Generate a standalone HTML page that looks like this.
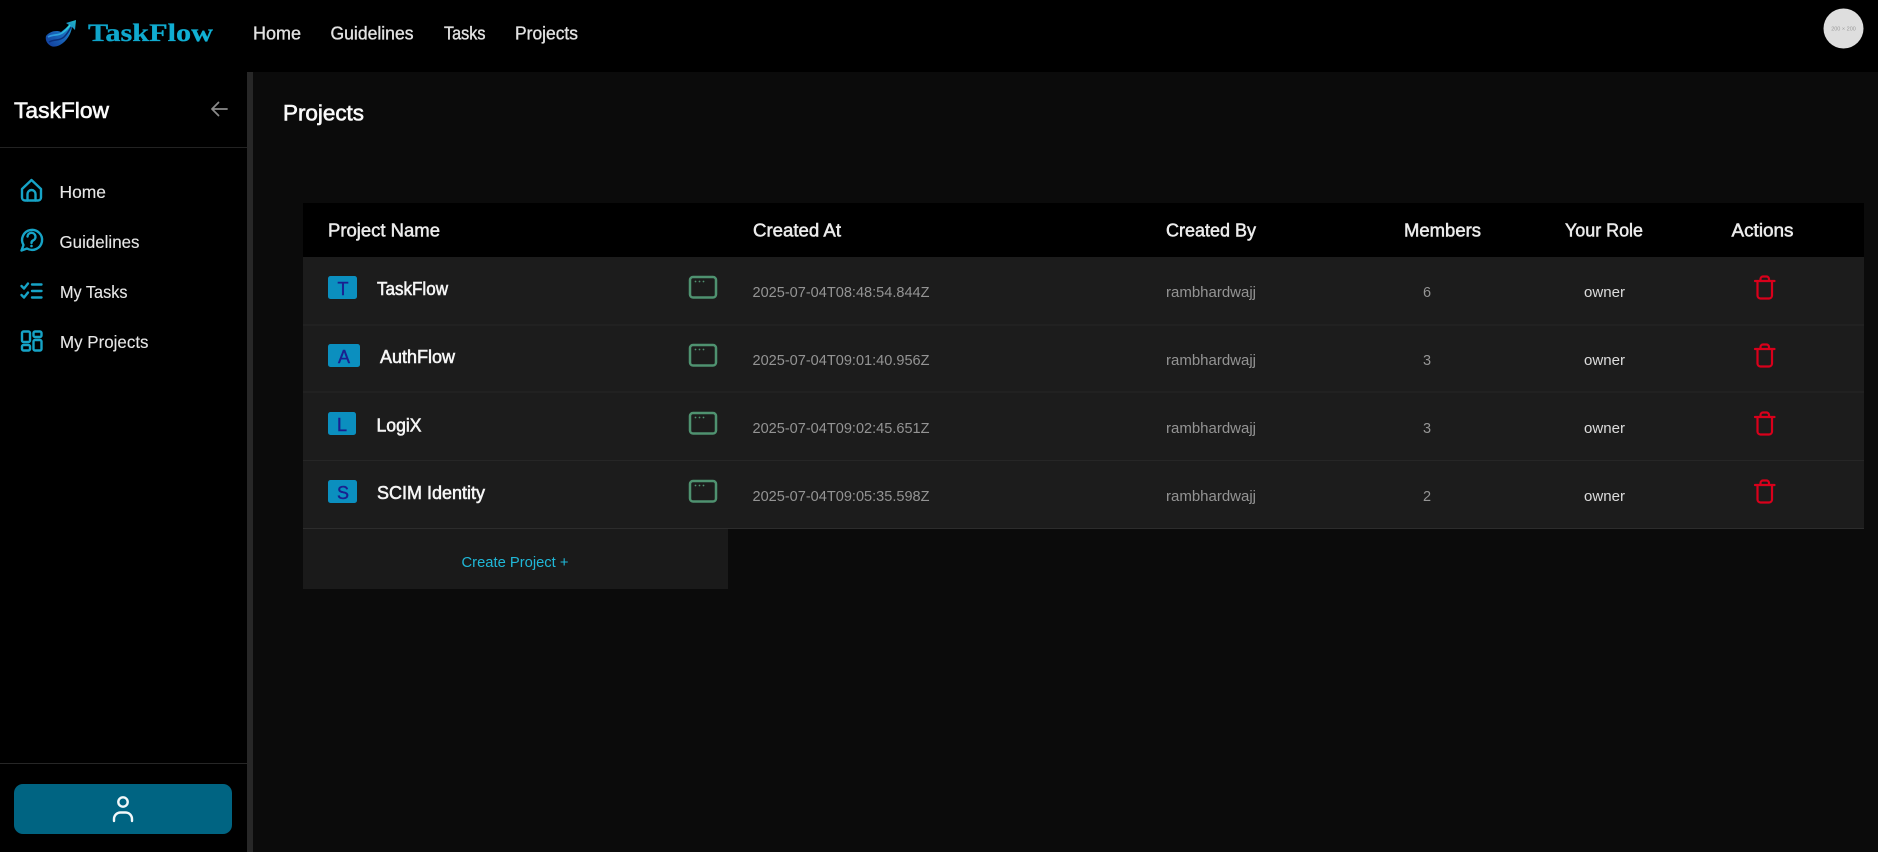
<!DOCTYPE html>
<html lang="en"><head><meta charset="utf-8"><title>TaskFlow – Projects</title>
<style>
html,body{margin:0;padding:0;background:#0b0b0b;width:1878px;height:852px;overflow:hidden}
svg{display:block}
text{font-family:"Liberation Sans",Arial,sans-serif}
.nav{font-size:18px;fill:#e2e2e2;stroke:#e2e2e2;stroke-width:.35}
.side{font-size:17.5px;fill:#e6e6e6;stroke:#e6e6e6;stroke-width:.12}
.th{font-size:18px;fill:#ececec;stroke:#ececec;stroke-width:.5}
.name{font-size:18px;fill:#f5f5f5;stroke:#f5f5f5;stroke-width:.55}
.muted{font-size:14.5px;fill:#949494}
.own{font-size:14.5px;fill:#dcdcdc}
.bl{font-size:18px;fill:#1a1f8f;stroke:#1a1f8f;stroke-width:.4;text-anchor:middle}
.ic{fill:none;stroke:#16a3c6;stroke-width:2.4;stroke-linecap:round;stroke-linejoin:round}
.win{fill:none;stroke:#4f9270;stroke-width:2.5}
.tr{fill:none;stroke:#d9001b;stroke-width:2.2;stroke-linejoin:round;stroke-linecap:round}
</style></head><body>
<svg width="1878" height="852" viewBox="0 0 1878 852" xmlns="http://www.w3.org/2000/svg">
<defs>
<linearGradient id="lg" x1="0" x2="1" y1="0" y2="0"><stop offset="0" stop-color="#0fa3c9"/><stop offset="1" stop-color="#11b4d6"/></linearGradient>
<linearGradient id="l1" x1="0" y1="1" x2="1" y2="0"><stop offset="0" stop-color="#123a9a"/><stop offset=".55" stop-color="#1a6fc0"/><stop offset="1" stop-color="#1fb8c8"/></linearGradient>
<linearGradient id="l2" x1="0" y1="1" x2="1" y2="0"><stop offset="0" stop-color="#2f8fe0"/><stop offset="1" stop-color="#2ad8d8"/></linearGradient>
</defs>
<rect width="1878" height="852" fill="#0b0b0b"/>

<!-- top nav -->
<rect width="1878" height="72" fill="#000"/>
<path d="M46 36C50 31 57 30 61 32C65 29 67 27 69 25L66 23L76 20L75 30L72 27C71 34 67 41 60 45C56 47 53 47 51 46C47 44 45 40 46 36Z" fill="url(#l1)"/>
<path d="M48 37C53 34 58 36 62 33C65 31 68 28 70 25" fill="none" stroke="url(#l2)" stroke-width="1.700"/>
<path d="M49 42C54 39 60 41 64 37C67 34 69 31 71 27" fill="none" stroke="#0a2f7a" stroke-width="1.500"/>
<text x="88" y="41" font-size="25" font-weight="700" fill="url(#lg)" stroke="#0fa8cc" stroke-width=".3" style="font-family:'Liberation Serif',serif" textLength="125" lengthAdjust="spacingAndGlyphs">TaskFlow</text>
<text class="nav" x="253" y="39.5" textLength="48" lengthAdjust="spacingAndGlyphs">Home</text>
<text class="nav" x="330.500" y="39.5" textLength="83" lengthAdjust="spacingAndGlyphs">Guidelines</text>
<text class="nav" x="444" y="39.5" textLength="41.500" lengthAdjust="spacingAndGlyphs">Tasks</text>
<text class="nav" x="515" y="39.5" textLength="63" lengthAdjust="spacingAndGlyphs">Projects</text>
<circle cx="1843.500" cy="28.500" r="20" fill="#dedede"/>
<text x="1843.500" y="30.500" font-size="5.500" fill="#9a9a9a" text-anchor="middle">200 × 200</text>

<!-- sidebar -->
<rect y="72" width="247" height="780" fill="#000"/>
<rect x="247" y="72" width="6" height="780" fill="#272727"/>
<text x="14" y="118" font-size="22" fill="#fafafa" stroke="#fafafa" stroke-width=".6" textLength="95" lengthAdjust="spacingAndGlyphs">TaskFlow</text>
<path d="M227 109H212M218.500 102.500L212 109L218.500 115.500" fill="none" stroke="#8a8a8a" stroke-width="1.800" stroke-linecap="round" stroke-linejoin="round"/>
<rect y="147" width="247" height="1" fill="#222"/>

<path class="ic" d="M22 189L31.500 180L41 189V197.500A3 3 0 0 1 38 200.500H25A3 3 0 0 1 22 197.500Z"/>
<path class="ic" d="M27.500 200.500V194A4 4 0 0 1 35.500 194V200.500"/>
<text class="side" x="59.500" y="198" textLength="46.500" lengthAdjust="spacingAndGlyphs">Home</text>

<path class="ic" d="M21.500 250.500L23.500 245A10 10 0 1 1 27 248.500Z"/>
<path class="ic" d="M27.500 236.500A4 4 0 1 1 33 240.500C32 241 31.500 241.500 31.500 243" stroke-width="2"/>
<circle cx="31.500" cy="246" r="1.300" fill="#16a3c6"/>
<text class="side" x="59.500" y="248" textLength="80" lengthAdjust="spacingAndGlyphs">Guidelines</text>

<path class="ic" d="M21.500 286L24 288.500L28 283.500M21.500 295L24 297.500L28 292.500M32 284.500H41.500M32 291H41.500M32 297.500H41.500"/>
<text class="side" x="60" y="298" textLength="67.500" lengthAdjust="spacingAndGlyphs">My Tasks</text>

<rect class="ic" x="22" y="331.500" width="8" height="10.500" rx="1.500"/>
<rect class="ic" x="22" y="345" width="8" height="5.500" rx="1.500"/>
<rect class="ic" x="33.500" y="331.500" width="8" height="5.500" rx="1.500"/>
<rect class="ic" x="33.500" y="340" width="8" height="10.500" rx="1.500"/>
<text class="side" x="60" y="348" textLength="88.500" lengthAdjust="spacingAndGlyphs">My Projects</text>

<rect y="763" width="247" height="1" fill="#262626"/>
<rect x="14" y="784" width="218" height="50" rx="9" fill="#006482"/>
<circle cx="123" cy="802" r="4.700" fill="none" stroke="#f2f8fa" stroke-width="2.400"/>
<path d="M114 821V819A6.500 6.500 0 0 1 120.500 812.500H125.500A6.500 6.500 0 0 1 132 819V821" fill="none" stroke="#f2f8fa" stroke-width="2.400" stroke-linecap="round"/>

<!-- main -->
<text x="283" y="120.500" font-size="22" fill="#fafafa" stroke="#fafafa" stroke-width=".6" textLength="81" lengthAdjust="spacingAndGlyphs">Projects</text>

<!-- table -->
<rect x="303" y="203" width="1561" height="54" fill="#000"/>
<rect x="303" y="257" width="1561" height="271" fill="#1c1c1c"/>
<rect x="303" y="324.500" width="1561" height="1" fill="#262626"/>
<rect x="303" y="391.500" width="1561" height="1" fill="#262626"/>
<rect x="303" y="460" width="1561" height="1" fill="#262626"/>
<rect x="303" y="528" width="1561" height="1" fill="#2c2c2c"/>
<rect x="303" y="529" width="425" height="60" fill="#1a1a1a"/>

<text class="th" x="328" y="236.500" textLength="112" lengthAdjust="spacingAndGlyphs">Project Name</text>
<text class="th" x="753" y="236.500" textLength="88" lengthAdjust="spacingAndGlyphs">Created At</text>
<text class="th" x="1166" y="236.500" textLength="90" lengthAdjust="spacingAndGlyphs">Created By</text>
<text class="th" x="1404" y="236.500" textLength="77" lengthAdjust="spacingAndGlyphs">Members</text>
<text class="th" x="1565" y="236.500" textLength="78" lengthAdjust="spacingAndGlyphs">Your Role</text>
<text class="th" x="1731.500" y="236.500" textLength="62" lengthAdjust="spacingAndGlyphs">Actions</text>

<!-- row 1 -->
<rect x="328" y="276" width="29" height="23" rx="2.500" fill="#0b8fbf"/><text class="bl" x="343" y="295">T</text>
<text class="name" x="377" y="295" textLength="71" lengthAdjust="spacingAndGlyphs">TaskFlow</text>
<rect class="win" x="690" y="277" width="26" height="20.500" rx="3"/><circle cx="695.500" cy="281.500" r=".9" fill="#4f9270"/><circle cx="699.500" cy="281.500" r=".9" fill="#4f9270"/><circle cx="703.500" cy="281.500" r=".9" fill="#4f9270"/>
<text class="muted" x="752.500" y="297" textLength="177" lengthAdjust="spacingAndGlyphs">2025-07-04T08:48:54.844Z</text>
<text class="muted" x="1166" y="297" textLength="90" lengthAdjust="spacingAndGlyphs">rambhardwajj</text>
<text class="muted" x="1427" y="297" text-anchor="middle">6</text>
<text class="own" x="1584" y="297" textLength="41" lengthAdjust="spacingAndGlyphs">owner</text>
<path class="tr" d="M1755 281H1774.500M1760.500 281V279A2.500 2.500 0 0 1 1763 276.500H1766.500A2.500 2.500 0 0 1 1769 279V281M1757.500 281V295.500A3 3 0 0 0 1760.500 298.500H1769A3 3 0 0 0 1772 295.500V281"/>

<!-- row 2 -->
<rect x="328" y="344" width="32" height="23" rx="2.500" fill="#0b8fbf"/><text class="bl" x="344" y="363">A</text>
<text class="name" x="380" y="363" textLength="75" lengthAdjust="spacingAndGlyphs">AuthFlow</text>
<rect class="win" x="690" y="345" width="26" height="20.500" rx="3"/><circle cx="695.500" cy="349.500" r=".9" fill="#4f9270"/><circle cx="699.500" cy="349.500" r=".9" fill="#4f9270"/><circle cx="703.500" cy="349.500" r=".9" fill="#4f9270"/>
<text class="muted" x="752.500" y="365" textLength="177" lengthAdjust="spacingAndGlyphs">2025-07-04T09:01:40.956Z</text>
<text class="muted" x="1166" y="365" textLength="90" lengthAdjust="spacingAndGlyphs">rambhardwajj</text>
<text class="muted" x="1427" y="365" text-anchor="middle">3</text>
<text class="own" x="1584" y="365" textLength="41" lengthAdjust="spacingAndGlyphs">owner</text>
<path class="tr" transform="translate(0 68)" d="M1755 281H1774.500M1760.500 281V279A2.500 2.500 0 0 1 1763 276.500H1766.500A2.500 2.500 0 0 1 1769 279V281M1757.500 281V295.500A3 3 0 0 0 1760.500 298.500H1769A3 3 0 0 0 1772 295.500V281"/>

<!-- row 3 -->
<rect x="328" y="412" width="28" height="23" rx="2.500" fill="#0b8fbf"/><text class="bl" x="342" y="431">L</text>
<text class="name" x="376.500" y="431.500" textLength="45" lengthAdjust="spacingAndGlyphs">LogiX</text>
<rect class="win" x="690" y="413" width="26" height="20.500" rx="3"/><circle cx="695.500" cy="417.500" r=".9" fill="#4f9270"/><circle cx="699.500" cy="417.500" r=".9" fill="#4f9270"/><circle cx="703.500" cy="417.500" r=".9" fill="#4f9270"/>
<text class="muted" x="752.500" y="433" textLength="177" lengthAdjust="spacingAndGlyphs">2025-07-04T09:02:45.651Z</text>
<text class="muted" x="1166" y="433" textLength="90" lengthAdjust="spacingAndGlyphs">rambhardwajj</text>
<text class="muted" x="1427" y="433" text-anchor="middle">3</text>
<text class="own" x="1584" y="433" textLength="41" lengthAdjust="spacingAndGlyphs">owner</text>
<path class="tr" transform="translate(0 136)" d="M1755 281H1774.500M1760.500 281V279A2.500 2.500 0 0 1 1763 276.500H1766.500A2.500 2.500 0 0 1 1769 279V281M1757.500 281V295.500A3 3 0 0 0 1760.500 298.500H1769A3 3 0 0 0 1772 295.500V281"/>

<!-- row 4 -->
<rect x="328" y="480" width="29" height="23" rx="2.500" fill="#0b8fbf"/><text class="bl" x="343" y="499">S</text>
<text class="name" x="377" y="499" textLength="108" lengthAdjust="spacingAndGlyphs">SCIM Identity</text>
<rect class="win" x="690" y="481" width="26" height="20.500" rx="3"/><circle cx="695.500" cy="485.500" r=".9" fill="#4f9270"/><circle cx="699.500" cy="485.500" r=".9" fill="#4f9270"/><circle cx="703.500" cy="485.500" r=".9" fill="#4f9270"/>
<text class="muted" x="752.500" y="501" textLength="177" lengthAdjust="spacingAndGlyphs">2025-07-04T09:05:35.598Z</text>
<text class="muted" x="1166" y="501" textLength="90" lengthAdjust="spacingAndGlyphs">rambhardwajj</text>
<text class="muted" x="1427" y="501" text-anchor="middle">2</text>
<text class="own" x="1584" y="501" textLength="41" lengthAdjust="spacingAndGlyphs">owner</text>
<path class="tr" transform="translate(0 204)" d="M1755 281H1774.500M1760.500 281V279A2.500 2.500 0 0 1 1763 276.500H1766.500A2.500 2.500 0 0 1 1769 279V281M1757.500 281V295.500A3 3 0 0 0 1760.500 298.500H1769A3 3 0 0 0 1772 295.500V281"/>

<text x="461.500" y="567" font-size="15" fill="#20b8d8" textLength="107" lengthAdjust="spacingAndGlyphs">Create Project +</text>
</svg>
</body></html>
